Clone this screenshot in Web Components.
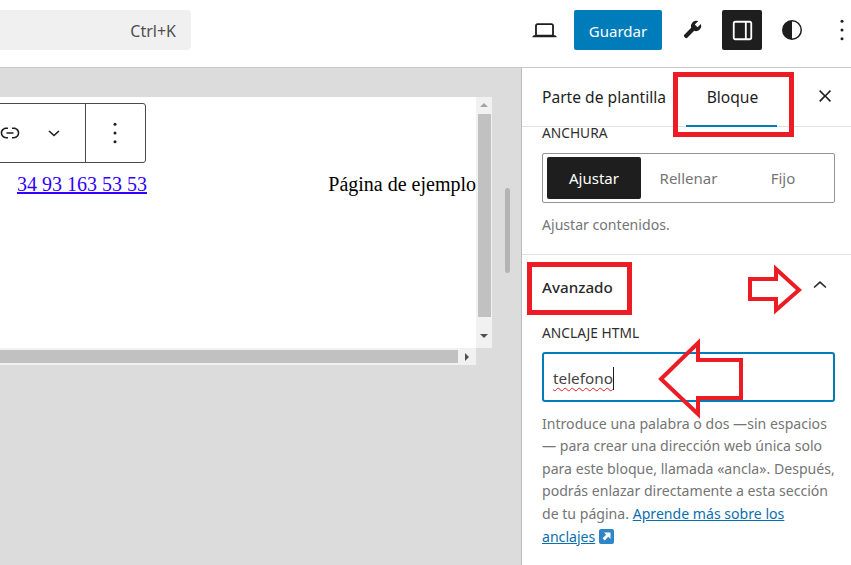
<!DOCTYPE html>
<html lang="es">
<head>
<meta charset="utf-8">
<title>Editor</title>
<style>
  html, body { margin: 0; height: 100%; overflow: hidden; background: #fff; }
  body { font-family: "Noto Sans", sans-serif; color: #1e1e1e; }
</style>
</head>
<body>
<editor-shell>
  <editor-topbar slot="top"></editor-topbar>
  <editor-canvas slot="canvas"></editor-canvas>
  <editor-sidebar slot="side"></editor-sidebar>
</editor-shell>
<red-marks></red-marks>

<script>
const dotsIcon = '<svg width="30" height="30" viewBox="0 0 24 24"><circle cx="12" cy="5" r="1.200"/><circle cx="12" cy="12" r="1.200"/><circle cx="12" cy="19" r="1.200"/></svg>';

class EditorShell extends HTMLElement {
    constructor() {
        super();
        this.attachShadow({ mode: 'open' });
        this.shadowRoot.innerHTML = `
            <style>
                :host {
                    display: grid;
                    grid-template-columns: 521px 330px;
                    grid-template-rows: 68px 497px;
                    width: 851px;
                    height: 565px;
                    overflow: hidden;
                }
                .top { grid-column: 1 / 3; display: block; }
            </style>
            <div class="top"><slot name="top"></slot></div>
            <slot name="canvas"></slot>
            <slot name="side"></slot>
        `;
    }
}

class EditorTopbar extends HTMLElement {
    constructor() {
        super();
        this.attachShadow({ mode: 'open' });
        this.shadowRoot.innerHTML = `
            <style>
                :host {
                    display: flex;
                    align-items: flex-start;
                    height: 68px;
                    box-sizing: border-box;
                    border-bottom: 1px solid #c9c9c9;
                    padding-top: 10px;
                    font: 15px "Noto Sans", sans-serif;
                }
                .search {
                    width: 191px;
                    height: 40px;
                    box-sizing: border-box;
                    background: #f0f0f0;
                    border-radius: 0 4px 4px 0;
                    display: flex;
                    align-items: center;
                    justify-content: flex-end;
                    padding: 2px 15px 0 0;
                    color: #4f4f4f;
                    font-size: 16px;
                }
                .tools {
                    margin-left: auto;
                    display: flex;
                    gap: 10px;
                }
                .icon {
                    width: 40px;
                    height: 40px;
                    display: grid;
                    place-items: center;
                    border-radius: 2px;
                }
                .save {
                    width: 88px;
                    height: 40px;
                    box-sizing: border-box;
                    padding-top: 2px;
                    background: #007cba;
                    color: #fff;
                    border-radius: 2px;
                    display: grid;
                    place-items: center;
                    font-size: 15px;
                }
                .panel { background: #1e1e1e; color: #fff; }
                .more { width: 18px; margin-left: 11px; }
                .more svg { margin: 0 -6px; }
                svg { display: block; fill: currentColor; }
            </style>
            <div class="search">Ctrl+K</div>
            <div class="tools">
                <div class="icon device"><svg width="29" height="29" viewBox="0 0 24 24"><path d="M20.500 16h-.7V8c0-1.100-.9-2-2-2H6.200c-1.100 0-2 .9-2 2v8h-.7c-.8 0-1.500.7-1.500 1.500h20c0-.8-.7-1.500-1.500-1.500zM5.700 8c0-.3.2-.5.5-.5h11.600c.3 0 .5.2.5.5v7.600H5.700V8z"/></svg></div>
                <div class="save">Guardar</div>
                <div class="icon wrench"><svg width="24" height="24" viewBox="0 0 24 24"><path d="M20.800 5.900 17.500 9.200l-2.700-2.700 3.300-3.300c-1.900-.7-4.100-.3-5.600 1.200-1.500 1.500-1.900 3.600-1.300 5.400l-6.900 6.900c-.6.6-.6 1.500 0 2.100l.9.9c.6.6 1.500.6 2.100 0l6.900-6.900c1.800.7 4 .3 5.500-1.300 1.500-1.500 1.900-3.700 1.100-5.600z"/></svg></div>
                <div class="icon panel"><svg width="29" height="29" viewBox="0 0 24 24"><path fill-rule="evenodd" d="M18 4H6c-1.100 0-2 .9-2 2v12c0 1.100.9 2 2 2h12c1.100 0 2-.9 2-2V6c0-1.100-.9-2-2-2zM5.500 18V6c0-.3.2-.5.5-.5h8v13H6c-.3 0-.5-.2-.5-.5zm13 0c0 .3-.2.5-.5.5h-2.500v-13H18c.3 0 .5.2.5.5v12z"/></svg></div>
                <div class="icon styles"><svg width="24" height="24" viewBox="0 0 24 24"><path d="M12 2a10 10 0 1 0 0 20 10 10 0 0 0 0-20zm0 18.500v-17a8.500 8.500 0 0 1 0 17z"/></svg></div>
                <div class="icon more">${dotsIcon}</div>
            </div>
        `;
    }
}

class EditorCanvas extends HTMLElement {
    constructor() {
        super();
        this.attachShadow({ mode: 'open' });
        this.shadowRoot.innerHTML = `
            <style>
                :host {
                    display: block;
                    position: relative;
                    background: #dcdcdc;
                    padding: 29px 29px 0 0;
                    height: 497px;
                    box-sizing: border-box;
                    overflow: hidden;
                }
                .frame {
                    display: grid;
                    grid-template-columns: 476px 16px;
                    grid-template-rows: 251px 17px;
                }
                .page {
                    position: relative;
                    background: #fff;
                    display: flex;
                    justify-content: space-between;
                    align-items: flex-start;
                    padding: 76px 0 0 17px;
                    font: 20px/22px "Liberation Serif", serif;
                    color: #000;
                }
                a { color: #3200ff; }
                .v {
                    background: #f1f1f1;
                    display: flex;
                    flex-direction: column;
                    align-items: center;
                    position: relative;
                }
                .arrow-up {
                    width: 0; height: 0; margin: 6px 0 7px;
                    border: 4px solid transparent;
                    border-top: 0;
                    border-bottom: 4px solid #a3a3a3;
                }
                .arrow-down {
                    width: 0; height: 0; margin: 17px 0 0;
                    border: 4px solid transparent;
                    border-bottom: 0;
                    border-top: 4px solid #505050;
                }
                .v .thumb { width: 13px; height: 203px; background: #c1c1c1; margin-left: 1px; }
                .h {
                    background: #f1f1f1;
                    display: flex;
                    align-items: center;
                    justify-content: flex-end;
                }
                .h .thumb { flex: 1; height: 13px; background: #c1c1c1; }
                .arrow-right {
                    width: 0; height: 0;
                    border: 4px solid transparent;
                    border-right: 0;
                    border-left: 4px solid #505050;
                }
                .h .end { width: 18px; display: flex; justify-content: center; }
                .toolbar {
                    position: absolute;
                    left: -10px;
                    top: 6px;
                    width: 156px;
                    height: 60px;
                    box-sizing: border-box;
                    background: #fff;
                    border: 1px solid #4a4a4a;
                    border-radius: 3px;
                    display: flex;
                    align-items: center;
                    color: #1e1e1e;
                }
                .group { display: flex; align-items: center; width: 94px; height: 100%; border-right: 1px solid #4a4a4a; position: relative; }
                .group svg { position: absolute; }
                .opts { flex: 1; display: grid; place-items: center; margin-left: -1px; }
                svg { display: block; fill: currentColor; }
                .canvas-thumb {
                    position: absolute;
                    left: 505px;
                    top: 120px;
                    width: 5px;
                    height: 85px;
                    border-radius: 3px;
                    background: #b4b4b4;
                }
            </style>
            <div class="frame">
                <div class="page">
                    <a href="#">34 93 163 53 53</a>
                    <span>Página de ejemplo</span>
                    <div class="toolbar">
                        <div class="group">
                            <svg style="left:7px;top:17px" width="24" height="24" viewBox="0 0 24 24"><path d="M10 17.400H8.100c-3 0-5.400-2.400-5.400-5.400s2.400-5.400 5.400-5.400H10V8.100H8.100c-2.100 0-3.900 1.800-3.900 3.900s1.800 3.900 3.900 3.900H10v1.500zM14 6.600h1.900c3 0 5.400 2.400 5.400 5.400s-2.400 5.400-5.400 5.400H14v-1.500h1.900c2.100 0 3.900-1.800 3.900-3.900s-1.800-3.900-3.900-3.900H14V6.600zM8.500 11.200h7v1.500h-7z"/></svg>
                            <svg style="left:51px;top:18px" width="24" height="24" viewBox="0 0 24 24"><path d="M17.500 9.500 12 14.500 6.500 9.500l1.100-1.100 4.400 4 4.400-4z"/></svg>
                        </div>
                        <div class="opts">${dotsIcon}</div>
                    </div>
                </div>
                <div class="v"><div class="arrow-up"></div><div class="thumb"></div><div class="arrow-down"></div></div>
                <div class="h"><div class="thumb"></div><div class="end"><div class="arrow-right"></div></div></div>
            </div>
            <div class="canvas-thumb"></div>
        `;
    }
}

class PanelSection extends HTMLElement {
    constructor() {
        super();
        this.attachShadow({ mode: 'open' });
        this.shadowRoot.innerHTML = `
            <style>
                :host {
                    display: block;
                    box-sizing: border-box;
                    padding: 0 16px 0 20px;
                    border-bottom: 1px solid #e0e0e0;
                }
                :host(:last-of-type) { border-bottom: 0; }
            </style>
            <slot></slot>
        `;
    }
}

class WidthToggle extends HTMLElement {
    constructor() {
        super();
        this.attachShadow({ mode: 'open' });
        this.shadowRoot.innerHTML = `
            <style>
                :host {
                    display: grid;
                    grid-template-columns: 94px 95px 94px;
                    height: 50px;
                    box-sizing: border-box;
                    border: 1px solid #949494;
                    border-radius: 2px;
                    padding: 3px 4px;
                    font-size: 15px;
                    color: #757575;
                }
                div { display: grid; place-items: center; }
                .on { background: #1e1e1e; color: #fff; border-radius: 2px; }
            </style>
            <div class="on">Ajustar</div><div>Rellenar</div><div>Fijo</div>
        `;
    }
}

class EditorSidebar extends HTMLElement {
    constructor() {
        super();
        this.attachShadow({ mode: 'open' });
        this.shadowRoot.innerHTML = `
            <style>
                :host {
                    display: flex;
                    flex-direction: column;
                    height: 497px;
                    box-sizing: border-box;
                    border-left: 1px solid #bcbcbc;
                    background: #fff;
                    font: 15px "Noto Sans", sans-serif;
                    color: #1e1e1e;
                }
                .tabs {
                    flex: none;
                    height: 59px;
                    box-sizing: border-box;
                    border-bottom: 1px solid #e0e0e0;
                    display: flex;
                    align-items: stretch;
                    padding-left: 20px;
                    font-size: 15.6px;
                }
                .tab { display: flex; align-items: center; box-sizing: border-box; }
                .active {
                    width: 91px;
                    margin-left: 20px;
                    padding-left: 2px;
                    justify-content: center;
                    border-bottom: 2px solid #007cba;
                    height: 59px;
                }
                .close { margin-left: auto; margin-right: 14px; display: grid; place-items: center; padding-bottom: 2px; }
                svg { display: block; fill: currentColor; }
                .label {
                    font-size: 13.75px;
                    line-height: 16px;
                    text-transform: uppercase;
                    color: #2f2f2f;
                }
                .width-label { margin-top: -2px; margin-bottom: 12px; }
                .hint { color: #757575; font-size: 14.1px; line-height: 22.6px; }
                .width-hint { margin: 11px 0 17px; }
                .adv-head {
                    display: flex;
                    align-items: center;
                    justify-content: space-between;
                    height: 64px;
                    font-weight: 500;
                    font-size: 15.2px;
                    color: #2a2a2a;
                }
                .adv-head svg { margin-right: 3px; margin-top: -3px; }
                .adv-label { margin-top: 6px; }
                .field {
                    height: 50px;
                    margin: 11px 0 11px;
                    box-sizing: border-box;
                    border: 2px solid #007cba;
                    border-radius: 3px;
                    display: flex;
                    align-items: center;
                    padding: 3px 0 0 9px;
                    font-size: 15.3px;
                    color: #444;
                }
                .typed {
                    text-decoration: underline wavy #e0202c 1px;
                    text-underline-offset: 3px;
                }
                .caret { width: 1px; height: 23px; background: #1e1e1e; }
                a { color: #0a6fae; }
                .ext { display: inline-block; vertical-align: -2px; margin-left: 0; }
            </style>
            <div class="tabs">
                <div class="tab">Parte de plantilla</div>
                <div class="tab active">Bloque</div>
                <div class="close"><svg width="24" height="24" viewBox="0 0 24 24"><path d="M13 11.800 17.800 7l1.100 1.100-4.800 4.800 4.800 4.800-1.100 1.100-4.800-4.800-4.800 4.800L7 17.700l4.800-4.800L7 8.100 8.100 7l4.900 4.800z" transform="translate(-.9 -.9)"/></svg></div>
            </div>
            <panel-section>
                <div class="label width-label">Anchura</div>
                <width-toggle></width-toggle>
                <div class="hint width-hint">Ajustar contenidos.</div>
            </panel-section>
            <panel-section>
                <div class="adv-head">Avanzado
                    <svg width="24" height="24" viewBox="0 0 24 24"><path d="M5.500 14 12 8l6.500 6-1.100 1.100L12 10.200l-5.400 4.900z"/></svg>
                </div>
                <div class="label adv-label">Anclaje HTML</div>
                <div class="field"><span class="typed">telefono</span><span class="caret"></span></div>
                <div class="hint">Introduce una palabra o dos —sin espacios — para crear una dirección web única solo para este bloque, llamada «ancla». Después, podrás enlazar directamente a esta sección de tu página. <a href="#">Aprende más sobre los</a> <a href="#">anclajes</a> <svg class="ext" width="15" height="15" viewBox="0 0 15 15"><rect width="15" height="15" rx="2" fill="#2e86c6"/><path d="M5 3.500h6.500V10L9.300 7.800 5.700 11.400 3.600 9.300l3.600-3.600z" fill="#fff"/></svg></div>
            </panel-section>
        `;
    }
}

// drawn-on annotations: they sit over the screenshot, so they have a free position
class RedMarks extends HTMLElement {
    constructor() {
        super();
        this.attachShadow({ mode: 'open' });
        this.shadowRoot.innerHTML = `
            <style>
                :host { position: absolute; left: 0; top: 0; width: 851px; height: 565px; pointer-events: none; }
                svg { display: block; }
                .mark { fill: none; stroke: #ed1c24; }
            </style>
            <svg width="851" height="565" viewBox="0 0 851 565">
                <rect class="mark" stroke-width="5" x="675.500" y="74.500" width="116" height="60"/>
                <rect class="mark" stroke-width="5" x="529.500" y="264.500" width="100" height="48"/>
                <path class="mark" stroke-width="4" d="M750 279H776V269L799 290 776 310V299H750Z"/>
                <path class="mark" stroke-width="4" d="M661 379 698 343V360H741V398H698V414Z"/>
            </svg>
        `;
    }
}

customElements.define('editor-shell', EditorShell);
customElements.define('editor-topbar', EditorTopbar);
customElements.define('editor-canvas', EditorCanvas);
customElements.define('panel-section', PanelSection);
customElements.define('width-toggle', WidthToggle);
customElements.define('editor-sidebar', EditorSidebar);
customElements.define('red-marks', RedMarks);
</script>
</body>
</html>
